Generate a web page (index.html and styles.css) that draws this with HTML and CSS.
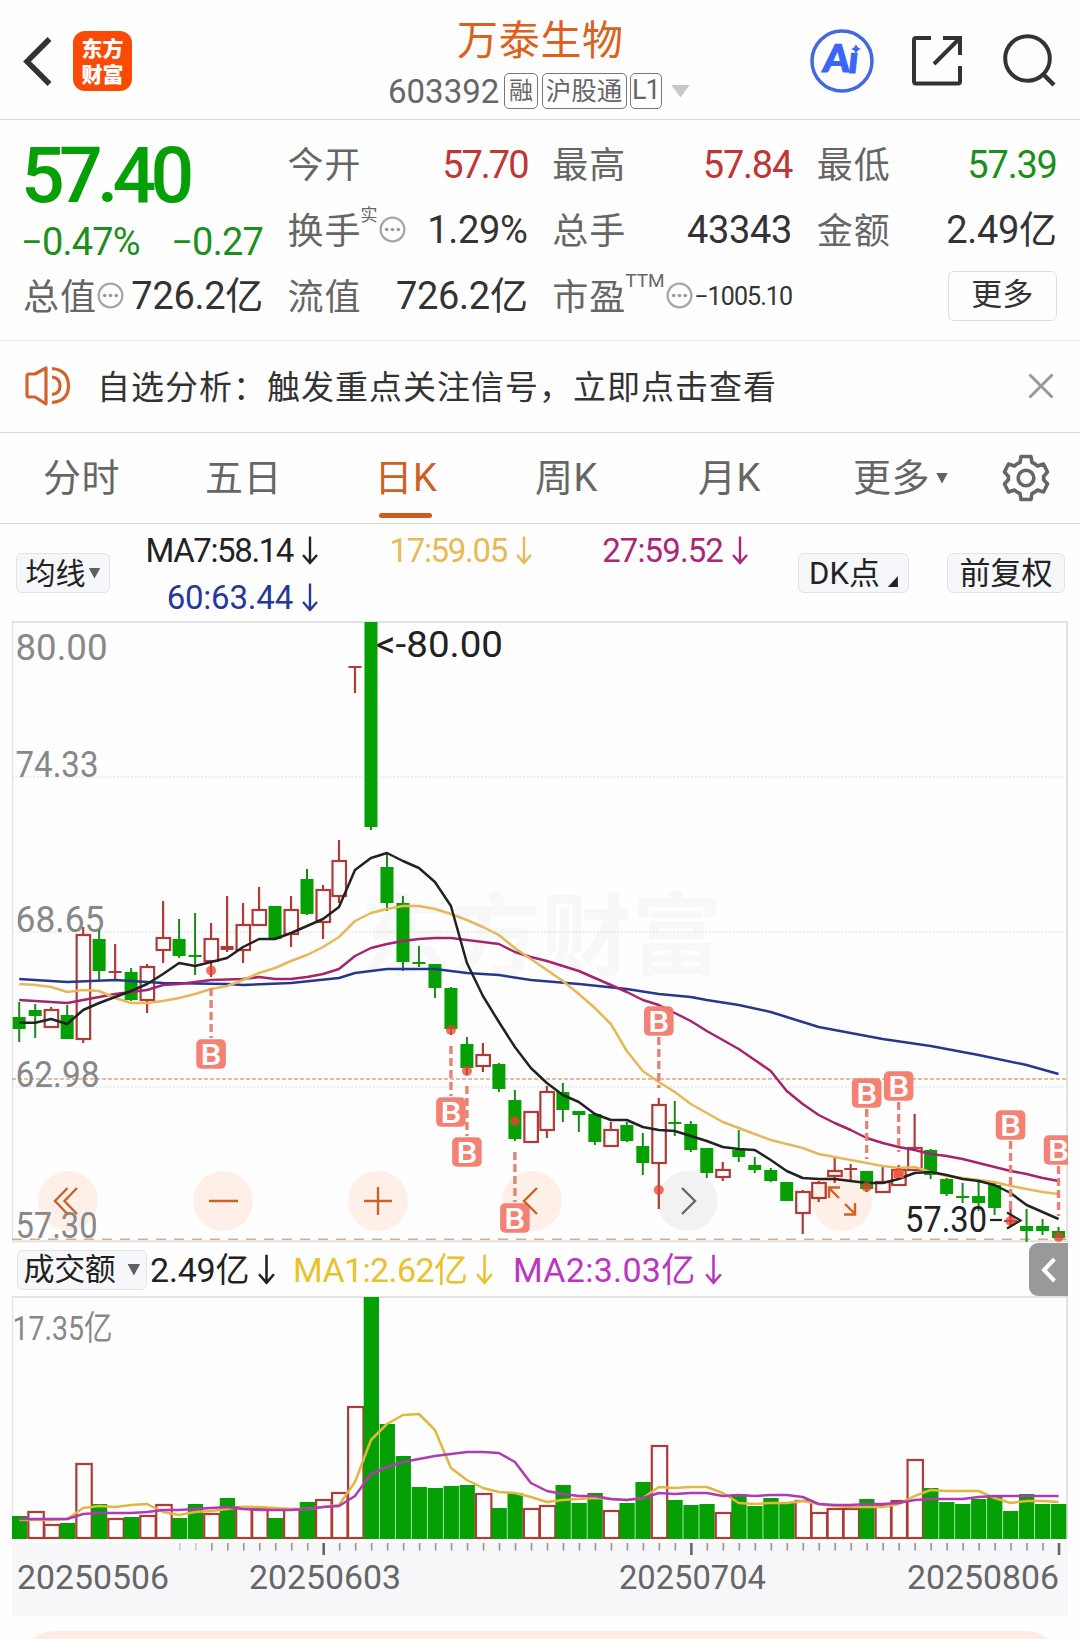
FILE: index.html
```html
<!DOCTYPE html>
<html lang="zh-CN">
<head>
<meta charset="utf-8">
<title>万泰生物 603392</title>
<link rel="stylesheet" href="styles.css">
</head>
<body>
<svg class="defs" width="0" height="0">
  <symbol id="down" viewBox="0 0 16 28"><path d="M8 0V26M1 18.5L8 26.5L15 18.5" fill="none" stroke="currentColor" stroke-width="2.4"/></symbol>
  <symbol id="info" viewBox="0 0 28 28"><circle cx="14" cy="14" r="12.3" fill="none" stroke="#a6a6a6" stroke-width="2.4"/><g fill="#999"><circle cx="8" cy="14" r="1.9"/><circle cx="14" cy="14" r="1.9"/><circle cx="20" cy="14" r="1.9"/></g></symbol>
</svg>

<header class="top">
  <div class="top-left">
    <svg width="30" height="50" viewBox="0 0 30 50"><path d="M26.500 3L4 25.500L26.500 48" fill="none" stroke="#333" stroke-width="5.500"/></svg>
    <div class="logo"><span>东方</span><span>财富</span></div>
  </div>
  <div class="title">
    <h1>万泰生物</h1>
    <div class="code"><span class="num">603392</span><span class="tag">融</span><span class="tag wide">沪股通</span><span class="tag l1">L1</span><i class="tri pale"></i></div>
  </div>
  <div class="top-icons">
    <svg width="64" height="64" viewBox="0 0 64 64"><circle cx="32" cy="32" r="30" fill="none" stroke="#4169e0" stroke-width="3.500"/><g transform="skewX(-6)"><text x="16.500" y="43" class="ai">A</text><text x="42" y="44" class="ai">ı</text></g><path d="M46 15Q47 19 51 20Q47 21 46 25Q45 21 41 20Q45 19 46 15Z" fill="#3b66f5"/></svg>
    <svg width="54" height="54" viewBox="0 0 54 54"><path d="M21 4H6Q4 4 4 6V47Q4 49.500 6 49.500H48Q50 49.500 50 47.500V32M33 4H50V21M50 4L24 30" fill="none" stroke="#333" stroke-width="4"/></svg>
    <svg width="56" height="56" viewBox="0 0 56 56"><circle cx="26.500" cy="25.500" r="22.300" fill="none" stroke="#333" stroke-width="4"/><path d="M41 40L53 52" stroke="#333" stroke-width="4.500"/></svg>
  </div>
</header>

<section class="quote">
  <div class="lead">
    <div class="price">57.40</div>
    <div class="row green change"><span>−0.47%</span><span>−0.27</span></div>
    <div class="row"><span class="label">总值<svg class="info"><use href="#info"/></svg></span><span class="val">726.2亿</span></div>
  </div>
  <div class="col">
    <div class="row"><span class="label">今开</span><span class="val red k">57.70</span></div>
    <div class="row"><span class="label">换手<sup>实</sup><svg class="info"><use href="#info"/></svg></span><span class="val">1.29%</span></div>
    <div class="row"><span class="label">流值</span><span class="val">726.2亿</span></div>
  </div>
  <div class="col">
    <div class="row"><span class="label">最高</span><span class="val red k2">57.84</span></div>
    <div class="row"><span class="label">总手</span><span class="val">43343</span></div>
    <div class="row"><span class="label">市盈<sup class="ttm">TTM</sup><svg class="info"><use href="#info"/></svg></span><span class="val small">−1005.10</span></div>
  </div>
  <div class="col">
    <div class="row"><span class="label">最低</span><span class="val green k2">57.39</span></div>
    <div class="row"><span class="label">金额</span><span class="val">2.49亿</span></div>
    <div class="row end"><span class="more">更多</span></div>
  </div>
</section>

<section class="notice">
  <svg width="46" height="40" viewBox="0 0 46 40" fill="none" stroke="#d0642c" stroke-width="3.200" stroke-linejoin="round"><path d="M2 10Q2 8 4 8H10L21 2V38L10 31H4Q2 31 2 29Z"/><path d="M27 11Q35 12 35 20Q35 27.500 27 28.500M27 2.500Q43.500 4 43.500 20Q43.500 35 27 36.500"/></svg>
  <p>自选分析：触发重点关注信号，立即点击查看</p>
  <svg width="26" height="26" viewBox="0 0 26 26"><path d="M1.500 1.500L24.500 24.500M24.500 1.500L1.500 24.500" stroke="#999" stroke-width="3"/></svg>
</section>

<nav class="tabs">
  <span>分时</span><span>五日</span><span class="active">日K</span><span>周K</span><span>月K</span><span class="drop">更多<i class="tri"></i></span>
  <svg width="48" height="48" viewBox="0 0 48 48" fill="none" stroke="#666" stroke-width="3.600"><path stroke-linejoin="round" d="M19 2.500H29L30 8.500Q33 9.500 35.500 12L41.500 10L45.500 18L41.500 22.500Q42 24 41.500 25.500L45.500 30L41.500 38L35.500 36Q33 38.500 30 39.500L29 45.500H19L18 39.500Q15 38.500 12.500 36L6.500 38L2.500 30L6.500 25.500Q6 24 6.500 22.500L2.500 18L6.500 10L12.500 12Q15 9.500 18 8.500Z"/><circle cx="24" cy="24" r="7.800"/></svg>
</nav>

<section class="legend">
  <span class="btn avg">均线<i class="tri"></i></span>
  <div class="mas">
    <span class="m1">MA7:58.14<svg><use href="#down"/></svg></span>
    <span class="m2">17:59.05<svg><use href="#down"/></svg></span>
    <span class="m3">27:59.52<svg><use href="#down"/></svg></span>
    <span class="m4">60:63.44<svg><use href="#down"/></svg></span>
  </div>
  <span class="btn dk">DK点<i class="corner"></i></span>
  <span class="btn fq">前复权</span>
</section>

<svg id="price" class="chart" width="1080" height="622" viewBox="0 621 1080 622"></svg>

<section class="volbar">
  <span class="btn amount">成交额<i class="tri"></i></span>
  <span class="v1">2.49亿<svg><use href="#down"/></svg></span>
  <span class="v2">MA1:2.62亿<svg><use href="#down"/></svg></span>
  <span class="v3">MA2:3.03亿<svg><use href="#down"/></svg></span>
  <span class="expand"><svg width="16" height="26" viewBox="0 0 16 26"><path d="M13.500 2L3 13L13.500 24" fill="none" stroke="#fff" stroke-width="4"/></svg></span>
</section>

<svg id="volume" class="chart" width="1080" height="320" viewBox="0 1296 1080 320"></svg>

<footer class="panel"></footer>
<script src="chart.js"></script>
</body>
</html>
```
FILE: styles.css
```css
* { box-sizing: border-box; }
body {
  margin: 0;
  width: 1080px;
  height: 1639px;
  overflow: hidden;
  background: #fefefe;
  color: #333;
  font-family: Roboto, "Noto Sans CJK SC", sans-serif;
  display: flex;
  flex-direction: column;
}
.defs { position: absolute; }
svg { display: block; flex: none; }
.red { color: #c03535; }
.green { color: #1c8f1c; }
.tri {
  display: inline-block;
  width: 12px;
  height: 11px;
  background: #606060;
  clip-path: polygon(0 0, 100% 0, 50% 100%);
}

.top {
  height: 120px;
  flex: none;
  border-bottom: 1.5px solid #d8d8d8;
  display: grid;
  grid-template-columns: 388px 1fr 270px;
}
.top-left { display: flex; padding: 31px 0 0 23px; gap: 20px; }
.top-left > svg { margin-top: 5px; }
.logo {
  width: 59px;
  height: 60px;
  border-radius: 12px;
  background: #fb4a04;
  color: #fff;
  font: 900 21px/26px "Noto Sans CJK SC", sans-serif;
  text-align: center;
  padding-top: 3px;
}
.logo span { display: block; }
.title h1 {
  margin: 14px 0 0 69px;
  font-size: 41px;
  line-height: 54px;
  font-weight: 400;
  letter-spacing: .7px;
  color: #dc611c;
}
.code { display: flex; align-items: center; height: 46px; color: #666; }
.code .num { font-size: 33px; width: 116px; }
.tag {
  border: 1.5px solid #777;
  border-radius: 5px;
  height: 36px;
  width: 34px;
  margin-right: 3.5px;
  font-size: 24px;
  line-height: 34px;
  text-align: center;
}
.tag.wide { width: 85px; font-size: 25.5px; }
.tag.l1 { width: 31.5px; font-size: 27px; line-height: 33px; letter-spacing: -1px; }
.pale { width: 19px; height: 13px; margin-left: 6px; background: #c8c8c8; }
.top-icons { display: flex; padding: 29px 0 0; }
.top-icons svg:nth-child(2) { margin: 5px 0 0 36px; }
.top-icons svg:nth-child(3) { margin: 4px 0 0 37px; }
.ai { font: 900 38px Lato, sans-serif; fill: #3b66f5; stroke: #3b66f5; stroke-width: 1.2; }

.quote {
  height: 221px;
  flex: none;
  border-bottom: 1.5px solid #ececec;
  padding: 12px 22px 0 23px;
  display: grid;
  grid-template-columns: repeat(4, 240px);
  column-gap: 24.6px;
}
.row { height: 66px; display: flex; align-items: center; justify-content: space-between; white-space: nowrap; }
.row.end { justify-content: flex-end; }
.label { display: flex; align-items: center; height: 50px; font-size: 36px; letter-spacing: 1px; color: #666; line-height: 50px; margin-top: 1px; }
.label sup { font-size: 17px; letter-spacing: 0; line-height: 20px; align-self: flex-start; vertical-align: baseline; margin: -2px 0 0 -1px; }
.label sup.ttm { font-size: 19px; }
.info { width: 27px; height: 27px; margin: -4px 0 0 0; }
.label sup + .info { margin-left: 1px; }
.val { font-size: 38px; line-height: 48px; height: 48px; letter-spacing: -.3px; font-family: Roboto, "Noto Sans CJK SC"; }
.lead .row:last-child .val, .col .row:nth-child(n+2) .val:not(.small) { margin-top: -2px; }
.val.k { letter-spacing: -2px; }
.val.k2 { letter-spacing: -1.2px; }
.val.small { font-size: 25px; letter-spacing: -.9px; }
.price { height: 78px; font-size: 77px; font-weight: 500; line-height: 88px; letter-spacing: -5.800px; color: #06a006; margin-left: -2px; }
.change { height: 54px; padding-top: 9px; font-size: 38px; letter-spacing: -.8px; margin-left: -2px; }
.more {
  width: 109px;
  height: 50px;
  border: 1.5px solid #dedede;
  border-radius: 6px;
  font-size: 31px;
  line-height: 46px;
  text-align: center;
  margin-top: -2px;
}

.notice { height: 92px; flex: none; border-bottom: 1.5px solid #d8d8d8; display: flex; align-items: center; padding: 0 26px 2px 25px; }
.notice p { margin: -2px auto 0 26px; font-size: 33px; letter-spacing: 1px; }

.tabs {
  height: 91px;
  flex: none;
  border-bottom: 1.5px solid #d8d8d8;
  display: grid;
  grid-template-columns: 162px 169.5px 160.500px 163px 155px 149px 48px;
  padding-left: 43px;
  align-items: center;
  font-size: 38px;
  letter-spacing: .5px;
  line-height: 87px;
  color: #666;
}
.tabs .active { color: #d05f22; position: relative; }
.tabs .active::after { content: ""; position: absolute; left: 4px; top: 78px; width: 53px; height: 5px; border-radius: 3px; background: #d05a1c; }
.tabs .drop .tri { margin-left: 6px; margin-bottom: 7px; }

.legend { height: 97px; flex: none; display: flex; padding: 0 15px 0 16px; }
.btn {
  height: 40px;
  margin-top: 29px;
  flex: none;
  border: 1.5px solid #e1e3e6;
  border-radius: 6px;
  background: #f6f7fa;
  color: #222;
  font-size: 31px;
  line-height: 37px;
  display: flex;
  align-items: center;
  justify-content: center;
}
.avg { width: 94px; font-size: 30px; }
.avg .tri { margin-left: 3px; }
.dk { width: 111px; margin-left: 50px; gap: 8px; }
.corner { width: 10px; height: 11px; margin-top: 17px; background: #222; clip-path: polygon(100% 0, 100% 100%, 0 100%); }
.fq { width: 118px; margin-left: auto; }
.mas {
  width: 638px;
  display: grid;
  grid-template-columns: 208px 214px 216px;
  grid-template-rows: 47px 47px;
  padding-top: 3px;
  font-size: 33px;
}
.mas span { display: flex; justify-content: flex-end; align-items: center; }
.mas svg { width: 16px; height: 29px; margin-left: 9px; }
.m1 { color: #222; letter-spacing: -1.4px; }
.m2 { color: #e9b955; letter-spacing: -1.3px; }
.m3 { color: #ad2478; letter-spacing: -.9px; }
.m4 { color: #26389a; letter-spacing: -.2px; }

.chart { overflow: visible; }
.chart text { font-family: Roboto, "Noto Sans CJK SC", sans-serif; }
.axis { fill: #888; }
.date { fill: #666; font-size: 33px; }
.mark { fill: #222; font-size: 36px; }
.badge { fill: #fff; font-size: 29px; font-weight: 500; }
.chart .water { font: 700 90px "Noto Sans CJK SC", sans-serif; fill: #f8f8f8; }

.volbar { height: 53px; flex: none; display: flex; align-items: center; padding-left: 17px; font-size: 34px; line-height: 40px; }
.volbar > span { display: flex; align-items: center; white-space: nowrap; height: 45px; }
.volbar > .btn { width: 130px; height: 40px; margin: 0 3px 0 0; letter-spacing: -.4px; }
.volbar .amount .tri { width: 13px; height: 12px; margin-left: 12px; }
.volbar span > svg { width: 17px; height: 31px; margin-left: 9px; }
.v1 { width: 143px; color: #222; letter-spacing: -.2px; }
.v2 { width: 220px; color: #e8c22c; letter-spacing: -.6px; }
.v3 { color: #bb34c4; letter-spacing: .3px; }
.volbar > .expand { width: 39px; height: 53px; margin-left: auto; margin-right: 12px; background: #999; border-radius: 9px 0 0 9px; justify-content: center; }
.volbar .expand svg { width: 16px; height: 26px; margin: 0; }

.panel { flex: none; margin: 15px 18px 0; height: 74px; border-radius: 37px; background: #fcece3; }
```
FILE: chart.js
```javascript
const GREEN = '#04a004', RED = '#b03a36';

// [direction, high, low, body top, body bottom] in chart pixels
const candles = [
  'g 1002 1042 1017 1029','g 1004 1038 1010 1016','r 1007 1028 1009 1028','g 1005 1039 1015 1039','r 927 1043 934 1040',
  'g 930 980 939 971','r 944 979 971 972','g 968 1001 972 1000','r 964 1013 966 1001','r 901 963 937 951',
  'g 919 958 939 956','g 913 975 955 957','r 923 977 938 962','r 896 952 946 950','r 903 963 924 951',
  'r 887 926 909 926','g 906 939 906 939','r 896 947 909 935','g 869 915 879 914','r 885 939 889 923',
  'r 840 903 860 897','r 667 693 666 667','g 622 830 622 827','g 852 911 867 903','g 896 971 903 962',
  'g 946 967 962 964','g 964 998 964 988','g 987 1035 988 1029','g 1037 1075 1044 1068','r 1043 1072 1054 1067',
  'g 1063 1092 1064 1089','g 1090 1141 1100 1139','r 1111 1143 1111 1143','r 1086 1138 1091 1131','g 1083 1122 1092 1110',
  'g 1111 1132 1111 1115','g 1114 1145 1114 1142','r 1122 1147 1129 1147','g 1122 1142 1125 1141','g 1133 1175 1146 1163',
  'r 1098 1209 1104 1164','g 1101 1136 1122 1124','g 1121 1152 1124 1150','g 1148 1178 1148 1173','r 1162 1181 1169 1178',
  'g 1130 1162 1150 1157','g 1157 1173 1165 1170','g 1168 1182 1170 1181','g 1182 1201 1182 1201','r 1190 1234 1191 1214',
  'r 1181 1202 1182 1199','r 1158 1183 1170 1177','r 1164 1181 1168 1169','g 1171 1192 1171 1189','r 1167 1193 1181 1193',
  'r 1165 1186 1169 1186','r 1114 1171 1147 1171','g 1149 1179 1150 1175','g 1178 1196 1179 1194','g 1183 1203 1196 1198',
  'g 1182 1211 1196 1203','g 1181 1215 1185 1208','r 1202 1226 1220 1222','g 1209 1242 1226 1231','g 1219 1235 1226 1231',
  'g 1227 1238 1231 1238'
].map(s => s.split(' ').map((v, i) => i ? +v : v));

const volumes = [1516,1511,1524,1523,1463,1504,1518,1517,1515,1504,1518,1504,1513,1498,1506,1508,1518,1508,1502,1499,1492,1406,1297,1424,1456,1487,1488,1486,1485,1493,1508,1493,1508,1505,1485,1503,1493,1510,1503,1482,1445,1500,1505,1504,1512,1494,1506,1498,1502,1500,1512,1508,1508,1499,1505,1500,1459,1488,1502,1504,1499,1497,1511,1494,1504,1504];
// days whose volume bar colour differs from the candle colour
const volumeColour = { 1: 'r', 13: 'g', 62: 'g' };

const ma7 = [1022.7,1022.7,1019,1024,1010,1003,997,991,984,974,963,966,962,958,947,939,939,933,926,919,907,870,858,853,861,868,882,906,963,996,1022,1047,1068,1083,1095,1102,1114,1120,1120,1127,1130,1131,1136,1141,1147,1149,1150,1160,1171,1178,1179,1179,1181,1183,1183,1179,1173,1172,1175,1179,1181,1185,1193,1205,1212,1219];
const ma17 = [984,985,987,992,990,991,998,1003,1003,1001,998,994,989,986,980,973,968,961,955,947,937,921,913,909,906,906,909,914,920,927,935,948,959,970,981,994,1008,1024,1051,1071,1082,1092,1104,1113,1122,1128,1134,1140,1144,1148,1154,1157,1160,1163,1166,1168,1167,1172,1176,1178,1180,1182,1186,1189,1192,1194];
const ma27 = [1000,1001,1002,1003,1000,997,994,992,990,985,984,982,980,979.5,979,977,979,979,977,974,969,956,948,944,941,939,938,938,940,942,944,952,957,961,966,971,978,985,992,1000,1005,1013,1021,1031,1040,1049,1060,1071,1091,1104,1115,1123,1130,1138,1143,1147,1150,1154,1156,1159,1163,1167,1171,1174,1178,1181];
const ma60 = [[0,979],[3,982],[6,980],[9,983],[13,984],[14,985],[17,983],[20,978],[21,973],[22,971],[23,969],[26,969],[28,973],[30,975],[32,980],[35,984],[38,989],[40,994],[42,997],[43,1000],[45,1005],[47,1012],[48,1017],[49,1022],[50,1027],[52,1033],[54,1039],[57,1046],[60,1055],[63,1065],[65,1074]];
const volMa1 = [1520,1520,1520,1519,1508,1506,1507,1505,1504,1512,1515,1512,1511,1509,1507,1507,1508,1509,1509,1507,1505,1482,1440,1424,1415,1414,1430,1468,1480,1488,1492,1493,1497,1502,1500,1499,1498,1499,1500,1498,1487,1488,1487,1487,1493,1503,1504,1503,1503,1501,1504,1506,1507,1507,1507,1504,1496,1490,1491,1491,1491,1498,1503,1501,1501,1502];
const volMa2 = [1519,1519,1519,1519,1514,1513,1513,1513,1512,1510,1510,1509,1508,1507,1509,1510,1510,1510,1509,1507,1506,1496,1474,1467,1462,1459,1456,1454,1452,1452,1453,1462,1483,1491,1494,1496,1496,1499,1500,1498,1493,1494,1493,1493,1496,1495,1496,1495,1495,1497,1504,1505,1505,1504,1504,1503,1500,1499,1499,1499,1497,1496,1496,1496,1496,1496];

// candle index, badge centre, dash start, dash end, dot centre
const signals = [[12,1054,988,1038,970.5],[27,1112,1046,1096,1030],[28,1152,1086,1136,1071],[31,1218,1152,1202,1121],[40,1021,1037,1088,1190],[53,1093,1109,1159,1187],[55,1086,1102,1152,1173],[62,1125,1141,1216,1221],[65,1150,1166,1216,1237]];

const cx = i => 19.2 + 15.99 * i;
const line = (x1, y1, x2, y2, c, w, dash) => `<line x1="${x1}" y1="${y1}" x2="${x2}" y2="${y2}" stroke="${c}" stroke-width="${w}"${dash ? ` stroke-dasharray="${dash}"` : ''}/>`;
const rect = (x, y, w, h, extra) => `<rect x="${x}" y="${y}" width="${w}" height="${h}" ${extra}/>`;
const poly = (pts, c) => `<polyline fill="none" stroke="${c}" stroke-width="2.5" stroke-linejoin="round" points="${pts.map((p, i) => Array.isArray(p) ? `${cx(p[0])},${p[1]}` : `${cx(i)},${p}`).join(' ')}"/>`;
const text = (s, x, y, w, cls, size) => `<text x="${x}" y="${y}" class="${cls}"${size ? ` font-size="${size}"` : ''} textLength="${w}" lengthAdjust="spacingAndGlyphs">${s}</text>`;

let p = text('东方财富', 360, 968, 362, 'water');
p += line(11.500, 622, 1068, 622, '#e2e2e2', 2) + line(12.500, 622, 12.500, 1242, '#e2e2e2', 1.3) + line(1067, 622, 1067, 1242, '#e2e2e2', 2);
[777, 932, 1087].forEach(y => p += line(12, y, 1067, y, '#dcdcdc', 1.2, '2 1.5'));
[68, 223, 378, 532, 687.7, 842].forEach((x, i) => p += `<circle cx="${x}" cy="1201" r="30" fill="${i === 4 ? '#f2f2f2' : '#fef0e8'}"/>`);
p += line(12, 1079, 1067, 1079, '#d9a887', 1.7, '4 2') + line(12, 1239.3, 1067, 1239.3, '#d4ad8a', 1.5, '10 8') + line(12, 1241.3, 1068, 1241.3, '#e2e2e2', 2);
[['80.00', 660, 92], ['74.33', 777, 83], ['68.65', 932, 89], ['62.98', 1087, 84], ['57.30', 1238, 82]].forEach(([s, y, w]) => p += text(s, 15.500, y, w, 'axis', 36));
candles.forEach(([d, hi, lo, top, bot], i) => {
  const x = cx(i);
  if (d === 'g') {
    p += line(x, hi, x, lo, '#198a19', 2) + rect(x - 6.500, top, 13, Math.max(bot - top, 1.500), `fill="${GREEN}"`);
  } else {
    p += line(x, hi, x, top, RED, 2.2) + line(x, bot, x, lo, RED, 2.2);
    p += bot - top < 5 ? rect(x - 6.500, top, 13, Math.max(bot - top, 2), `fill="${RED}"`) : rect(x - 6.500, top + 1, 13.500, bot - top - 2, `fill="none" stroke="${RED}" stroke-width="2.2"`);
  }
});
p += poly(ma60, '#26388c') + poly(ma27, '#a5246f') + poly(ma17, '#e5b85a') + poly(ma7, '#222');
p += '<svg x="0" y="621" width="1068" height="622" viewBox="0 621 1068 622">';
signals.forEach(([i, y, a, b, dot]) => {
  const x = cx(i);
  p += line(x, a, x, b, '#e58474', 3.4, '8 4') + `<circle cx="${x}" cy="${dot}" r="5" fill="#ee4030" fill-opacity=".75"/>`;
  p += rect(x - 14.800, y - 14.800, 29.600, 29.600, 'rx="5" fill="#f47d6e" fill-opacity=".96"') + text('B', x - 10.500, y + 10.500, 21, 'badge');
});
p += rect(cx(55) - 5, 1170, 10, 8, 'fill="#f25a48"') + '</svg>';
p += text('&lt;-80.00', 376, 657, 127, 'mark') + text('57.30', 905, 1232, 82, 'mark');
p += line(990, 1220, 1002, 1220, '#222', 2.2) + '<path d="M1007 1212.500L1020.500 1220.500L1007 1228.500" fill="none" stroke="#222" stroke-width="2.2"/>';
p += '<g fill="none" stroke="#c8622c" stroke-width="2.4"><path d="M67.500 1188L55 1201L67.500 1214M77 1188L64.500 1201L77 1214M209 1201H238M364 1201H392M378 1187V1215M537 1188L524 1201L537 1214"/><path stroke="#666" d="M682 1188L695 1201L682 1214"/><path stroke="#d8601c" d="M839 1198L829 1188M829 1198V1187.500H840M845 1204L855 1214M855 1203V1214.500H844"/></g>';
document.getElementById('price').innerHTML = p;

let v = line(11.500, 1297, 1068, 1297, '#e2e2e2', 2) + line(12.500, 1297, 12.500, 1539, '#e2e2e2', 1.3) + line(1067, 1297, 1067, 1539, '#e2e2e2', 2);
v += rect(12, 1542.500, 1056, 73.500, 'fill="#f7f7fa"');
const step = 15.985;
volumes.forEach((y, i) => {
  const x = 12 + step * i;
  v += (volumeColour[i] || candles[i][0]) === 'g' ? rect(x, y, 15.300, 1539 - y, `fill="${GREEN}"`) : rect(x + .4, y + 1, 15.400, 1537 - y, `fill="#fefefe" stroke="${RED}" stroke-width="2.2"`);
  if (i >= 10) {
    const major = i === 19 || i === 42 || i === 65;
    v += line(x + 8, 1543, x + 8, major ? 1555 : 1550.500, major ? '#666' : i < 12 ? '#ccc' : '#999', major ? 2.6 : 1.7);
  }
});
v += poly(volMa1, '#e0b840') + poly(volMa2, '#b03ab4');
v += text('17.35亿', 12.500, 1340, 100, 'axis', 34);
[['20250506', 17], ['20250603', 249], ['20250704', 619], ['20250806', 907]].forEach(([s, x], i) => v += text(s, x, 1589, i === 2 ? 147 : 152, 'date'));
document.getElementById('volume').innerHTML = v;
```
